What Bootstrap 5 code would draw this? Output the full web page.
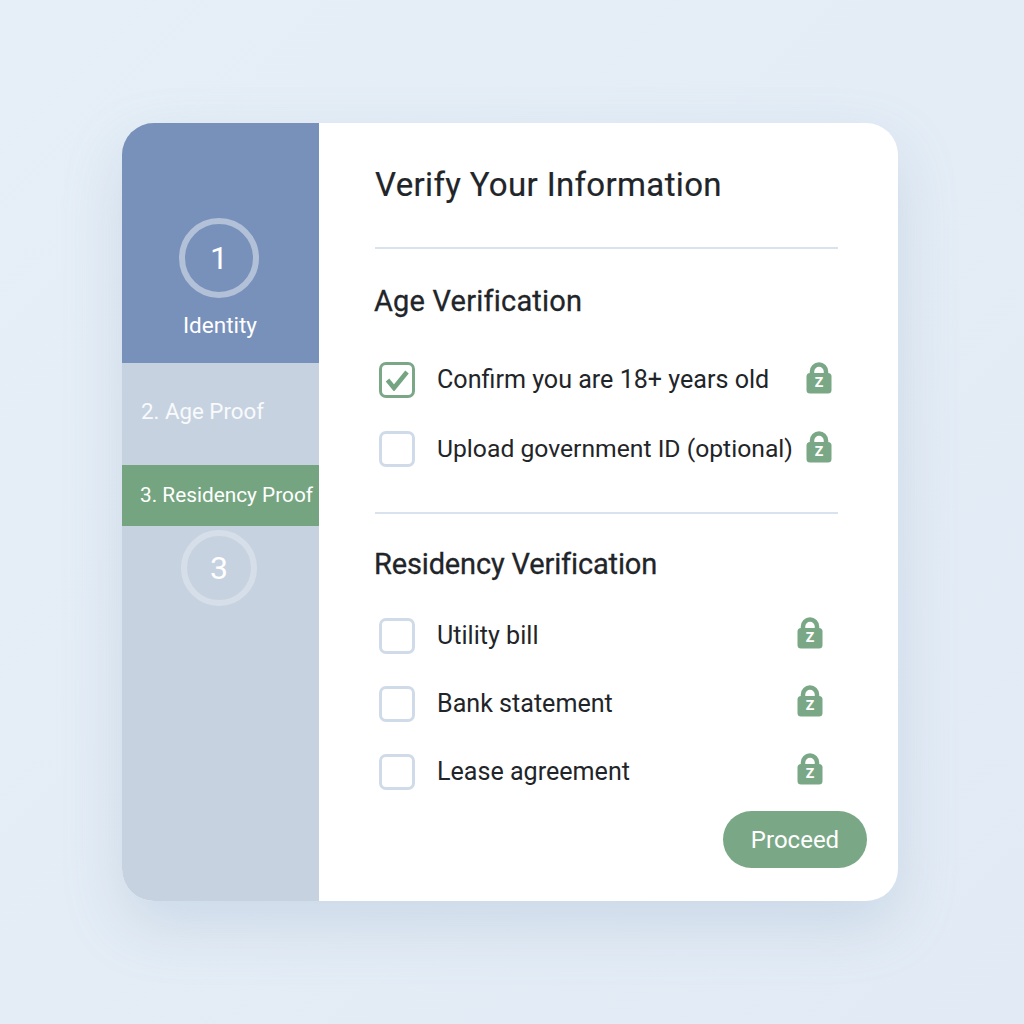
<!DOCTYPE html>
<html lang="en">
<head>
  <meta charset="UTF-8">
  <title>Verify Your Information</title>
  <link href="https://cdn.jsdelivr.net/npm/bootstrap@5.3.0/dist/css/bootstrap.min.css" rel="stylesheet">
  <style>
    body {
      width: 1024px;
      height: 1024px;
      background: linear-gradient(135deg, #e6eff7, #e2ebf5);
      font-family: Roboto, "Liberation Sans", sans-serif;
      color: #1f2529;
      overflow: hidden;
    }
    .verify-card {
      width: 776px;
      height: 778px;
      margin: 123px 0 0 122px;
      border-radius: 32px;
      overflow: hidden;
      background: #fff;
      box-shadow: 0 24px 60px rgba(120, 145, 180, .22);
    }
    .side {
      width: 197px;
      background: #c7d2e0;
      color: #fff;
    }
    .side-active {
      height: 240px;
      padding: 95px 3px 0 0;
      background: #7891bb;
    }
    .step-ring {
      border-radius: 50%;
      font-size: 32px;
      line-height: 1;
    }
    .ring-one {
      width: 80px;
      height: 80px;
      border: 6px solid #b3c1d8;
    }
    .ring-three {
      width: 76px;
      height: 76px;
      margin: 4px 3px 0 0;
      border: 6px solid #d6dfe9;
    }
    .side-label {
      font-size: 22.5px;
      margin: 13px 0 0 2px;
      line-height: 28px;
    }
    .side-age {
      height: 102px;
      padding: 34px 0 0 19px;
      font-size: 22.3px;
      line-height: 28px;
      color: #f8fafc;
    }
    .side-res {
      height: 61px;
      padding-left: 18px;
      font-size: 20.8px;
      background: #75a580;
      white-space: nowrap;
    }
    .content {
      padding: 38px 31px 0 53px;
    }
    .page-title {
      font-size: 33px;
      font-weight: 400;
      line-height: 48px;
      margin: 0 0 0 3px;
      letter-spacing: .35px;
      -webkit-text-stroke: .2px #1f2529;
    }
    .rule {
      height: 2px;
      margin: 38px 29px 0 3px;
      background: #d9e3ee;
    }
    .rule-two { margin-top: 45px; }
    .section-title {
      font-size: 29px;
      font-weight: 400;
      line-height: 36px;
      margin: 0 0 0 2px;
      -webkit-text-stroke: .3px #1f2529;
    }
    .first-title { margin-top: 34px; letter-spacing: .2px; }
    .second-title { margin-top: 32px; letter-spacing: -.15px; }
    .check-row {
      height: 36px;
      margin-left: 7px;
      font-size: 25.1px;
    }
    .row-upload { font-size: 24.7px; }
    .check-box {
      flex: none;
      width: 36px;
      height: 36px;
      border: 3px solid #cfdbe8;
      border-radius: 7px;
      margin-right: 22px;
      background: #fff;
    }
    .check-box.on { border-color: #7aa886; }
    .lock-wrap {
      flex: none;
      width: 26px;
      height: 32px;
      margin-bottom: 4px;
    }
    .lock-wrap svg { display: block; width: 26px; height: 32px; }
    .lock-z {
      left: 0;
      right: 0;
      top: 9px;
      font-size: 18px;
      font-weight: 500;
      line-height: 20px;
      text-align: center;
      color: #fff;
    }
    .rows-one { margin-top: 43px; margin-right: 35px; gap: 33px; }
    .rows-two { margin-top: 36px; margin-right: 44px; gap: 32px; }
    .rows-two .lock-wrap { margin-bottom: 6px; }
    .go-btn {
      width: 144px;
      height: 57px;
      margin-top: 21px;
      border: 0;
      border-radius: 29px;
      background: #7aa886;
      color: #fff;
      font-size: 24px;
    }
    .go-btn:hover { background: #6f9c7b; color: #fff; }
  </style>
</head>
<body>
  <svg width="0" height="0" class="position-absolute">
    <symbol id="lock-shape" viewBox="0 0 26 32">
      <path d="M6 14V9.5a7 7 0 0 1 14 0V14" fill="none" stroke="#7aa886" stroke-width="4.5"/>
      <rect x=".5" y="11" width="25" height="20.5" rx="3.5" fill="#7aa886"/>
    </symbol>
  </svg>

  <div class="verify-card d-flex">
    <!-- Steps -->
    <div class="side d-flex flex-column">
      <div class="side-active d-flex flex-column align-items-center">
        <div class="step-ring ring-one d-flex align-items-center justify-content-center">1</div>
        <div class="side-label">Identity</div>
      </div>
      <div class="side-age">2. Age Proof</div>
      <div class="side-res d-flex align-items-center">3. Residency Proof</div>
      <div class="step-ring ring-three d-flex align-items-center justify-content-center align-self-center">3</div>
    </div>

    <!-- Form -->
    <div class="content flex-grow-1 d-flex flex-column">
      <h1 class="page-title">Verify Your Information</h1>
      <div class="rule"></div>

      <h2 class="section-title first-title">Age Verification</h2>
      <div class="rows-one d-flex flex-column">
        <div class="check-row d-flex align-items-center">
          <span class="check-box on d-flex align-items-center justify-content-center">
            <svg width="26" height="22" viewBox="0 0 26 22"><path d="M3.5 11l6.5 8L23 3" fill="none" stroke="#74a481" stroke-width="4.5"/></svg>
          </span>
          <span class="flex-grow-1">Confirm you are 18+ years old</span>
          <span class="lock-wrap position-relative"><svg><use href="#lock-shape"/></svg><span class="lock-z position-absolute">z</span></span>
        </div>
        <div class="check-row row-upload d-flex align-items-center">
          <span class="check-box"></span>
          <span class="flex-grow-1">Upload government ID (optional)</span>
          <span class="lock-wrap position-relative"><svg><use href="#lock-shape"/></svg><span class="lock-z position-absolute">z</span></span>
        </div>
      </div>
      <div class="rule rule-two"></div>

      <h2 class="section-title second-title">Residency Verification</h2>
      <div class="rows-two d-flex flex-column">
        <div class="check-row d-flex align-items-center">
          <span class="check-box"></span>
          <span class="flex-grow-1">Utility bill</span>
          <span class="lock-wrap position-relative"><svg><use href="#lock-shape"/></svg><span class="lock-z position-absolute">z</span></span>
        </div>
        <div class="check-row d-flex align-items-center">
          <span class="check-box"></span>
          <span class="flex-grow-1">Bank statement</span>
          <span class="lock-wrap position-relative"><svg><use href="#lock-shape"/></svg><span class="lock-z position-absolute">z</span></span>
        </div>
        <div class="check-row d-flex align-items-center">
          <span class="check-box"></span>
          <span class="flex-grow-1">Lease agreement</span>
          <span class="lock-wrap position-relative"><svg><use href="#lock-shape"/></svg><span class="lock-z position-absolute">z</span></span>
        </div>
      </div>

      <button type="button" class="btn go-btn align-self-end p-0">Proceed</button>
    </div>
  </div>
</body>
</html>
